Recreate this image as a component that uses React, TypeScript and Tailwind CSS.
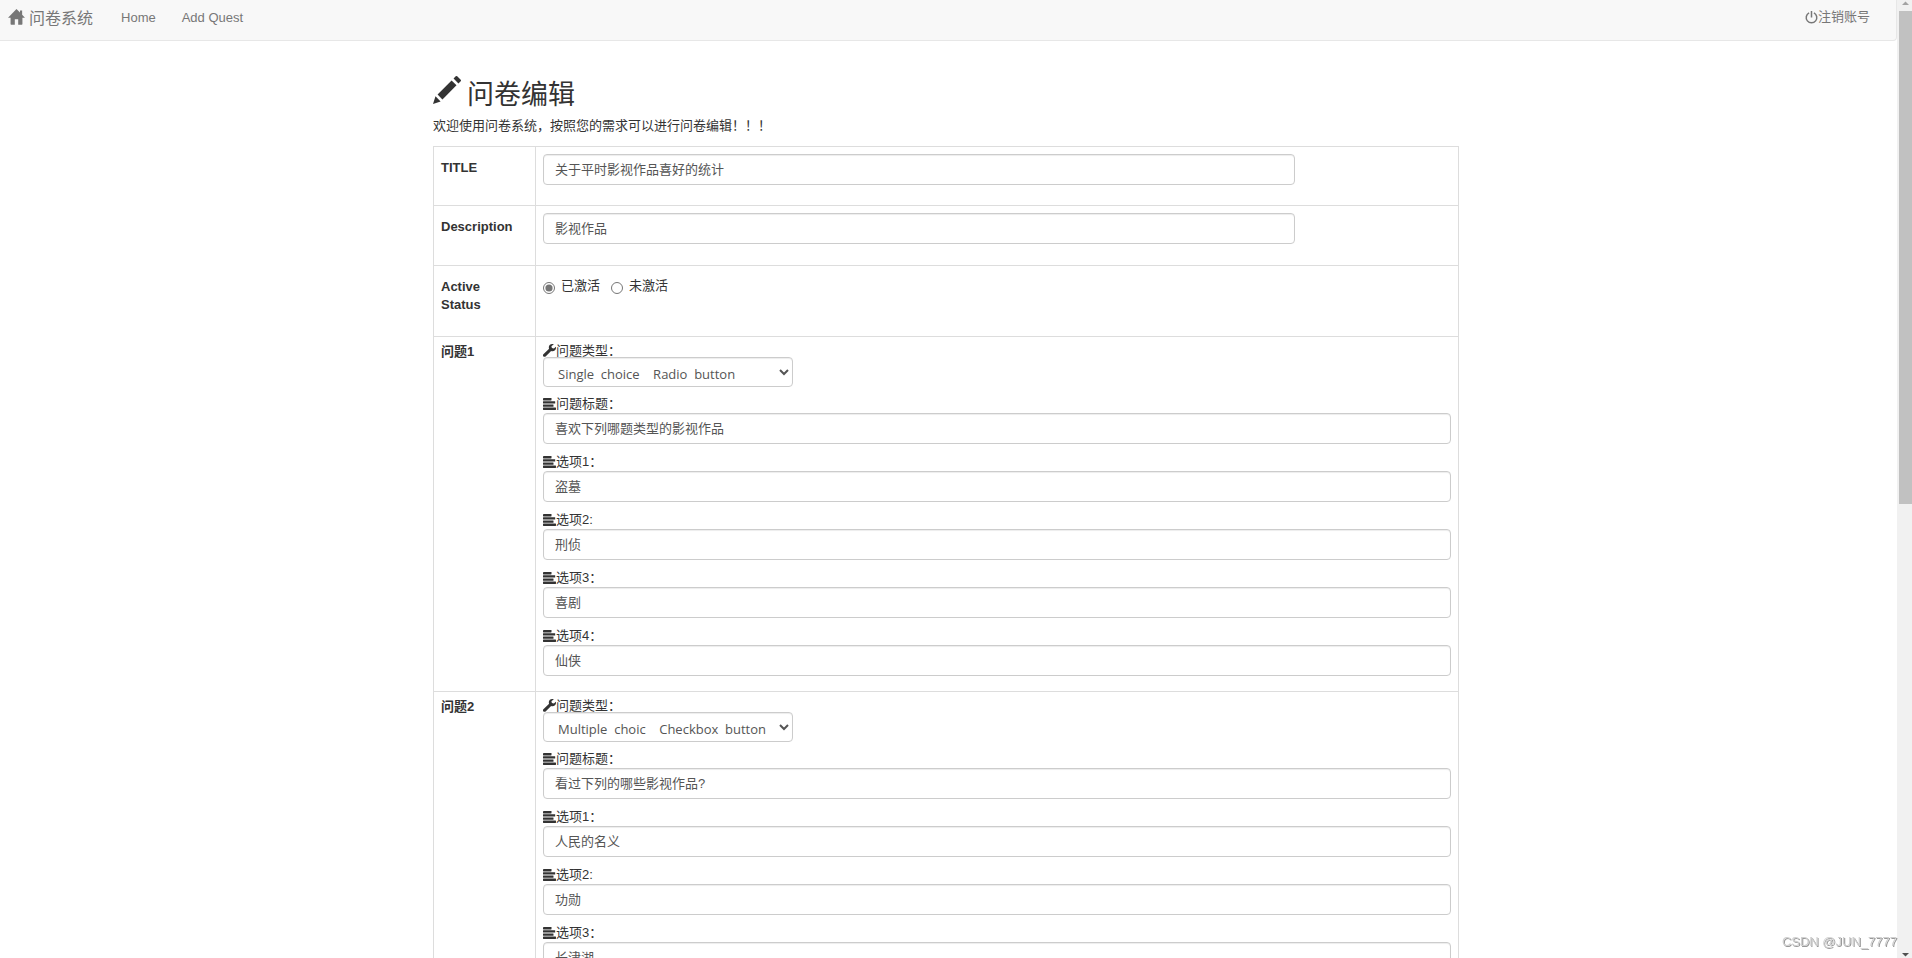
import type { ReactNode } from "react";

type Option = { label: string; value: string };
type Question = { id: number; type: string; title: string; options: Option[] };

const TYPES = [
  "Single\u00a0 choice\u00a0\u00a0\u00a0 Radio\u00a0 button",
  "Multiple\u00a0 choic\u00a0\u00a0\u00a0 Checkbox\u00a0 button",
];

const QUESTIONS: Question[] = [
  {
    id: 1,
    type: TYPES[0],
    title: "喜欢下列哪题类型的影视作品",
    options: [
      { label: "选项1：", value: "盗墓" },
      { label: "选项2:", value: "刑侦" },
      { label: "选项3：", value: "喜剧" },
      { label: "选项4：", value: "仙侠" },
    ],
  },
  {
    id: 2,
    type: TYPES[1],
    title: "看过下列的哪些影视作品?",
    options: [
      { label: "选项1：", value: "人民的名义" },
      { label: "选项2:", value: "功勋" },
      { label: "选项3：", value: "长津湖" },
    ],
  },
];

const INPUT =
  "block h-[31px] rounded border border-[#ccc] bg-white px-[11px] pb-0.5 text-[#555] shadow-[inset_0_1px_1px_rgba(0,0,0,0.075)] outline-none focus:border-[#66afe9]";

function HomeIcon() {
  return (
    <svg viewBox="0 0 18 17" className="h-4 w-[17px]" fill="currentColor" aria-hidden="true">
      <path d="M9 0 0 9.2h2.7V16q0 .7.7.7h3.8v-5.9h3.6v5.9h3.8q.7 0 .7-.7V9.2H18l-3-3.1V1.7h-2.3v2.1z" />
    </svg>
  );
}

function OffIcon() {
  return (
    <svg viewBox="0 0 14 14" className="size-[13px]" fill="none" stroke="currentColor" strokeWidth="1.6" aria-hidden="true">
      <path d="M4.4 2a5.700 5.700 0 1 0 5.200 0" />
      <path d="M7 0v7" />
    </svg>
  );
}

function PencilIcon() {
  return (
    <svg viewBox="-16 -10 1226 1226" className="size-7" fill="currentColor" aria-hidden="true">
      <g transform="matrix(1 0 0 -1 0 1200)">
        <path d="M1011 1210q19 0 33 -13l153 -153q13 -14 13 -33t-13 -33l-99 -92l-214 214l95 96q13 14 32 14zM1013 800l-615 -614l-214 214l614 614zM317 96l-333 -112l110 335z" />
      </g>
    </svg>
  );
}

function WrenchIcon() {
  return (
    <svg viewBox="0 0 13 13" className="size-[13px] shrink-0" fill="currentColor" aria-hidden="true">
      <path d="M10.800.2C9-.4 7 .2 6.200 1.800c-.5 1-.5 2-.1 3L.400 10.200c-.6.600-.6 1.600 0 2.200s1.600.6 2.200 0L8.100 7.100c1.400.4 2.900.1 3.900-.9.900-.9 1.200-2.300.9-3.500l-2 1.900-2-.5-.5-1.800z" />
    </svg>
  );
}

function AlignLeftIcon() {
  return (
    <svg viewBox="0 0 13 12" className="h-3 w-[13px] shrink-0" fill="currentColor" aria-hidden="true">
      <rect x="0" y="0" width="8.500" height="2.400" rx=".4" />
      <rect x="0" y="3.200" width="12.200" height="2.400" rx=".4" />
      <rect x="0" y="6.400" width="10.500" height="2.400" rx=".4" />
      <rect x="0" y="9.600" width="13" height="2.400" rx=".4" />
    </svg>
  );
}

function Row({ head, compact, children }: { head: ReactNode; compact?: boolean; children: ReactNode }) {
  return (
    <tr>
      <th
        scope="row"
        className={
          compact
            ? "w-[102px] border border-[#ddd] px-[7px] pt-[6px] text-left align-top font-bold"
            : "w-[102px] border border-[#ddd] px-[7px] pt-3 text-left align-top font-bold"
        }
      >
        {head}
      </th>
      <td className="border border-[#ddd] p-[7px] align-top">{children}</td>
    </tr>
  );
}

function TextField({ id, label, value }: { id: string; label: string; value: string }) {
  return (
    <>
      <label htmlFor={id} className="mt-2 flex w-fit items-center">
        <AlignLeftIcon />
        {label}
      </label>
      <input id={id} type="text" defaultValue={value} className={`${INPUT} mb-px w-full`} />
    </>
  );
}

function QuestionRow({ question }: { question: Question }) {
  const prefix = `question-${question.id}`;
  return (
    <Row head={`问题${question.id}`} compact>
      <div className="mb-[7px] flex flex-col">
        <label htmlFor={`${prefix}-type`} className="flex h-[13px] w-fit items-center">
          <WrenchIcon />
          问题类型：
        </label>
        <select
          id={`${prefix}-type`}
          defaultValue={question.type}
          className="relative block h-[30px] w-[250px] rounded border border-[#ccc] bg-white px-[10px] pt-[3px] font-['Open_Sans','Noto_Sans_CJK_SC',sans-serif] text-[#555] shadow-[inset_0_1px_1px_rgba(0,0,0,0.075)]"
        >
          {TYPES.map((type) => (
            <option key={type} value={type}>
              {type}
            </option>
          ))}
        </select>
        <TextField id={`${prefix}-title`} label="问题标题：" value={question.title} />
        {question.options.map((option, i) => (
          <TextField key={option.label} id={`${prefix}-option-${i + 1}`} label={option.label} value={option.value} />
        ))}
      </div>
    </Row>
  );
}

function ScrollRail() {
  return (
    <div className="flex w-[15px] shrink-0 flex-col items-center bg-[#f1f1f1]" aria-hidden="true">
      <svg viewBox="0 0 15 11" className="h-[11px] w-[15px] shrink-0" fill="#a3a3a3">
        <path d="M8.500 1.500 12 5H5z" />
      </svg>
      <div className="flex w-full grow flex-col pl-0.5">
        <div className="h-[493px] bg-[#c1c1c1]" />
      </div>
      <svg viewBox="0 0 15 11" className="h-[11px] w-[15px] shrink-0" fill="#505050">
        <path d="M8.500 9.500 12 6H5z" />
      </svg>
    </div>
  );
}

export default function App() {
  return (
    <div className="flex h-screen bg-white font-['Liberation_Sans','Noto_Sans_CJK_SC',sans-serif] text-[13px] leading-[18px] text-[#333]">
      <div className="min-w-0 grow overflow-y-auto [scrollbar-width:none]">
        <nav className="flex h-[41px] items-start rounded-br border-r border-b border-[#e7e7e7] bg-[#f8f8f8] pl-2 text-[#777]">
          <a href="#" className="mr-7 flex items-start gap-1 pt-[9px] text-base leading-5">
            <HomeIcon />
            问卷系统
          </a>
          <a href="#" className="mr-[26px] pt-[9px]">
            Home
          </a>
          <a href="#" className="pt-[9px]">
            Add Quest
          </a>
          <a href="#" className="mr-[26px] ml-auto flex items-center pt-2">
            <OffIcon />
            注销账号
          </a>
        </nav>

        <main className="pr-[5px]">
          <form className="mx-auto max-w-[1026px]" onSubmit={(e) => e.preventDefault()}>
            <h1 className="mt-[35px] flex items-start gap-[6px] text-[27px] leading-[30px]">
              <PencilIcon />
              <span className="pt-1">问卷编辑</span>
            </h1>
            <p className="mt-[7px] mb-[11px]">欢迎使用问卷系统，按照您的需求可以进行问卷编辑！！！</p>
            <table className="w-full table-fixed border-collapse">
              <tbody>
                <Row head={<label htmlFor="title">TITLE</label>}>
                  <input
                    id="title"
                    type="text"
                    defaultValue="关于平时影视作品喜好的统计"
                    className={`${INPUT} mb-[13px] w-[752px] max-w-full`}
                  />
                </Row>
                <Row head={<label htmlFor="description">Description</label>}>
                  <input
                    id="description"
                    type="text"
                    defaultValue="影视作品"
                    className={`${INPUT} mb-[14px] w-[752px] max-w-full`}
                  />
                </Row>
                <Row
                  head={
                    <span id="status-label">
                      Active
                      <br />
                      Status
                    </span>
                  }
                >
                  <div role="radiogroup" aria-labelledby="status-label" className="flex h-14 gap-[11px] pt-[3px]">
                    <label className="flex h-5 items-center gap-[6px]">
                      <input type="radio" name="status" defaultChecked className="mt-1 size-3 accent-[#767676]" />
                      已激活
                    </label>
                    <label className="flex h-5 items-center gap-[6px]">
                      <input type="radio" name="status" className="mt-1 size-3 accent-[#767676]" />
                      未激活
                    </label>
                  </div>
                </Row>
                {QUESTIONS.map((question) => (
                  <QuestionRow key={question.id} question={question} />
                ))}
              </tbody>
            </table>
          </form>
        </main>
      </div>
      <ScrollRail />
      <div className="fixed right-[15px] bottom-[7px] text-[#d0d0d0] [text-shadow:1px_1px_0_#999]">
        CSDN @JUN_7777
      </div>
    </div>
  );
}
